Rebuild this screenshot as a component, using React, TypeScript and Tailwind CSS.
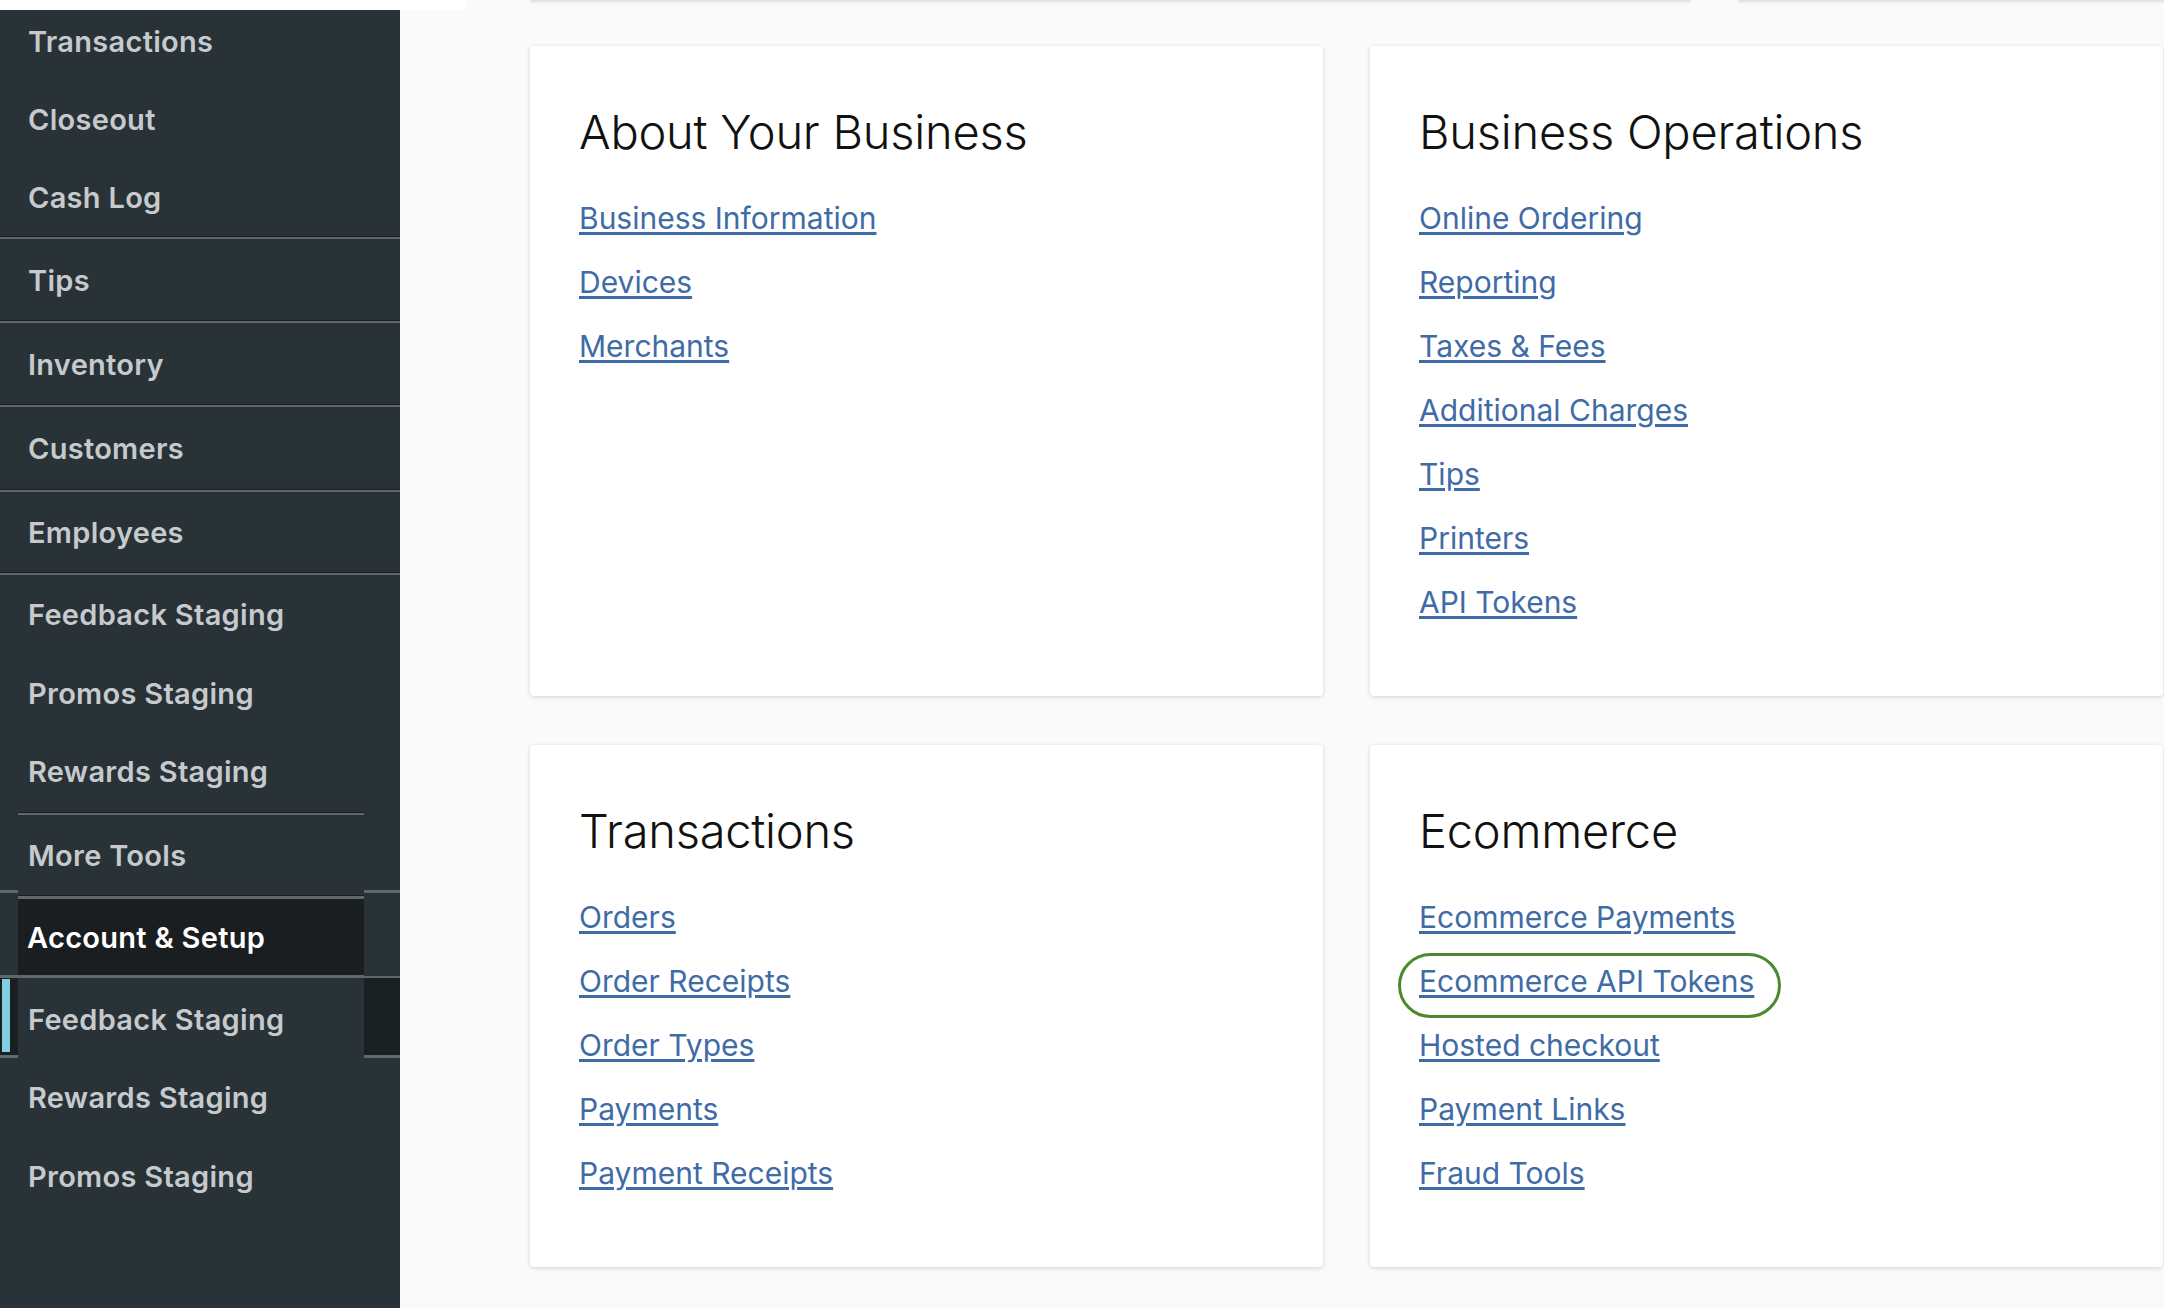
import React from "react";

const SB = "bg-[#283237]";
const DARK = "bg-[#1a1f22]";
const GRAY = "bg-[#5f686c]";

function Sep() {
  return (
    <div className="flex flex-col">
      <div className={`h-[1px] ${DARK}`} />
      <div className={`h-[2px] ${GRAY}`} />
    </div>
  );
}

function Item({ label, h, extra = "" }: { label: string; h: string; extra?: string }) {
  return (
    <div className={`flex items-center pl-[28px] ${h} ${extra}`}>
      <span className="text-[29px] leading-none font-semibold text-[#c6cacd] tracking-[0.01em]">{label}</span>
    </div>
  );
}

function Sidebar() {
  return (
    <div className={`w-[400px] shrink-0 ${SB} flex flex-col`} style={{ fontFamily: "Inter, 'Noto Sans', sans-serif" }}>
      <Item label="Transactions" h="h-[71px]" extra="pb-[9px]" />
      <Item label="Closeout" h="h-[78px]" extra="pb-[2px]" />
      <Item label="Cash Log" h="h-[77px]" extra="pb-[1px]" />
      <Sep />
      <Item label="Tips" h="h-[81px]" extra="pt-[2px]" />
      <Sep />
      <Item label="Inventory" h="h-[81px]" extra="pt-[2px]" />
      <Sep />
      <Item label="Customers" h="h-[82px]" extra="pt-[1px]" />
      <Sep />
      <Item label="Employees" h="h-[80px]" extra="pt-[1px]" />
      <Sep />
      <Item label="Feedback Staging" h="h-[79px]" />
      <Item label="Promos Staging" h="h-[78px]" />
      <Item label="Rewards Staging" h="h-[80px]" extra="pb-[1px]" />
      <div className="pl-[18px] pr-[36px]">
        <Sep />
      </div>
      <Item label="More Tools" h="h-[75px]" extra="pt-[6px]" />
      <div className="flex h-[168px]">
        <div className="w-[18px] flex flex-col">
          <div className={`h-[3px] ${GRAY}`} />
          <div className={`h-[82px] ${SB}`} />
          <div className={`h-[3px] ${GRAY}`} />
          <div className={`h-[77px] ${DARK} pl-[2px] pt-[1px] pb-[3px] flex`}>
            <div className="w-[8px] bg-[#7fcfe0]" />
          </div>
          <div className={`h-[3px] ${GRAY}`} />
        </div>
        <div className="w-[346px] flex flex-col">
          <div className={`h-[5px] ${SB}`} />
          <div className={`h-[1px] ${DARK}`} />
          <div className={`h-[3px] ${GRAY}`} />
          <div className={`h-[76px] bg-[#1a1e21] flex items-center pl-[9px]`}>
            <span className="text-[29px] leading-none font-semibold text-white tracking-[0.01em]">Account &amp; Setup</span>
          </div>
          <div className={`h-[3px] ${GRAY}`} />
          <div className={`h-[80px] ${SB} flex items-center pl-[10px] pt-[3px]`}>
            <span className="text-[29px] leading-none font-semibold text-[#c6cacd] tracking-[0.01em]">Feedback Staging</span>
          </div>
        </div>
        <div className="w-[36px] flex flex-col">
          <div className={`h-[3px] ${GRAY}`} />
          <div className={`h-[83px] ${SB}`} />
          <div className={`h-[2px] ${GRAY}`} />
          <div className={`h-[77px] ${DARK}`} />
          <div className={`h-[3px] ${GRAY}`} />
        </div>
      </div>
      <Item label="Rewards Staging" h="h-[80px]" extra="pb-[1px]" />
      <Item label="Promos Staging" h="h-[78px]" extra="pb-[1px]" />
      <div className="flex-1" />
    </div>
  );
}

function LinkRow({ label, circled }: { label: string; circled?: boolean }) {
  return (
    <div className="h-[64px] flex items-center">
      <span className="relative">
        <a
          href="#"
          className="text-[30px] leading-[64px] text-[#3f6ba6] underline decoration-[3px] underline-offset-[3px]"
        >
          {label}
        </a>
        {circled && (
          <span className="absolute left-[-21px] right-[-27px] top-[4px] h-[65px] rounded-full border-[3px] border-[#4a8a2c]" />
        )}
      </span>
    </div>
  );
}

function Card({ title, links, circled }: { title: string; links: string[]; circled?: string }) {
  return (
    <div className="bg-white rounded-[4px] shadow-[0_1px_4px_rgba(0,0,0,0.16)] px-[49px] pt-[62px] pb-[62px]">
      <h2 className="text-[47px] leading-none font-light text-[#111] tracking-[-0.005em]">{title}</h2>
      <div className="mt-[31px] flex flex-col">
        {links.map((l) => (
          <LinkRow key={l} label={l} circled={l === circled} />
        ))}
      </div>
    </div>
  );
}

export default function App() {
  return (
    <div className="w-[2164px] h-[1308px] overflow-hidden bg-[#fafafa] flex flex-col" style={{ fontFamily: "Inter, 'Noto Sans', sans-serif" }}>
      <div className="h-[10px] flex shrink-0">
        <div className="w-[466px] bg-white" />
        <div className="flex-1 flex pl-[64px]">
          <div className="w-[1161px] h-[4px] bg-linear-to-b from-[#dedede] to-[#fafafa]" />
          <div className="w-[47px]" />
          <div className="flex-1 h-[4px] bg-linear-to-b from-[#dedede] to-[#fafafa]" />
        </div>
      </div>
      <div className="flex flex-1 min-h-0">
        <Sidebar />
        <div className="flex-1 min-w-0 overflow-hidden pl-[130px] pt-[36px]">
          <div className="grid grid-cols-[793px_793px] gap-x-[47px] gap-y-[49px]">
            <Card title="About Your Business" links={["Business Information", "Devices", "Merchants"]} />
            <Card
              title="Business Operations"
              links={["Online Ordering", "Reporting", "Taxes & Fees", "Additional Charges", "Tips", "Printers", "API Tokens"]}
            />
            <Card title="Transactions" links={["Orders", "Order Receipts", "Order Types", "Payments", "Payment Receipts"]} />
            <Card
              title="Ecommerce"
              links={["Ecommerce Payments", "Ecommerce API Tokens", "Hosted checkout", "Payment Links", "Fraud Tools"]}
              circled="Ecommerce API Tokens"
            />
          </div>
        </div>
      </div>
    </div>
  );
}
